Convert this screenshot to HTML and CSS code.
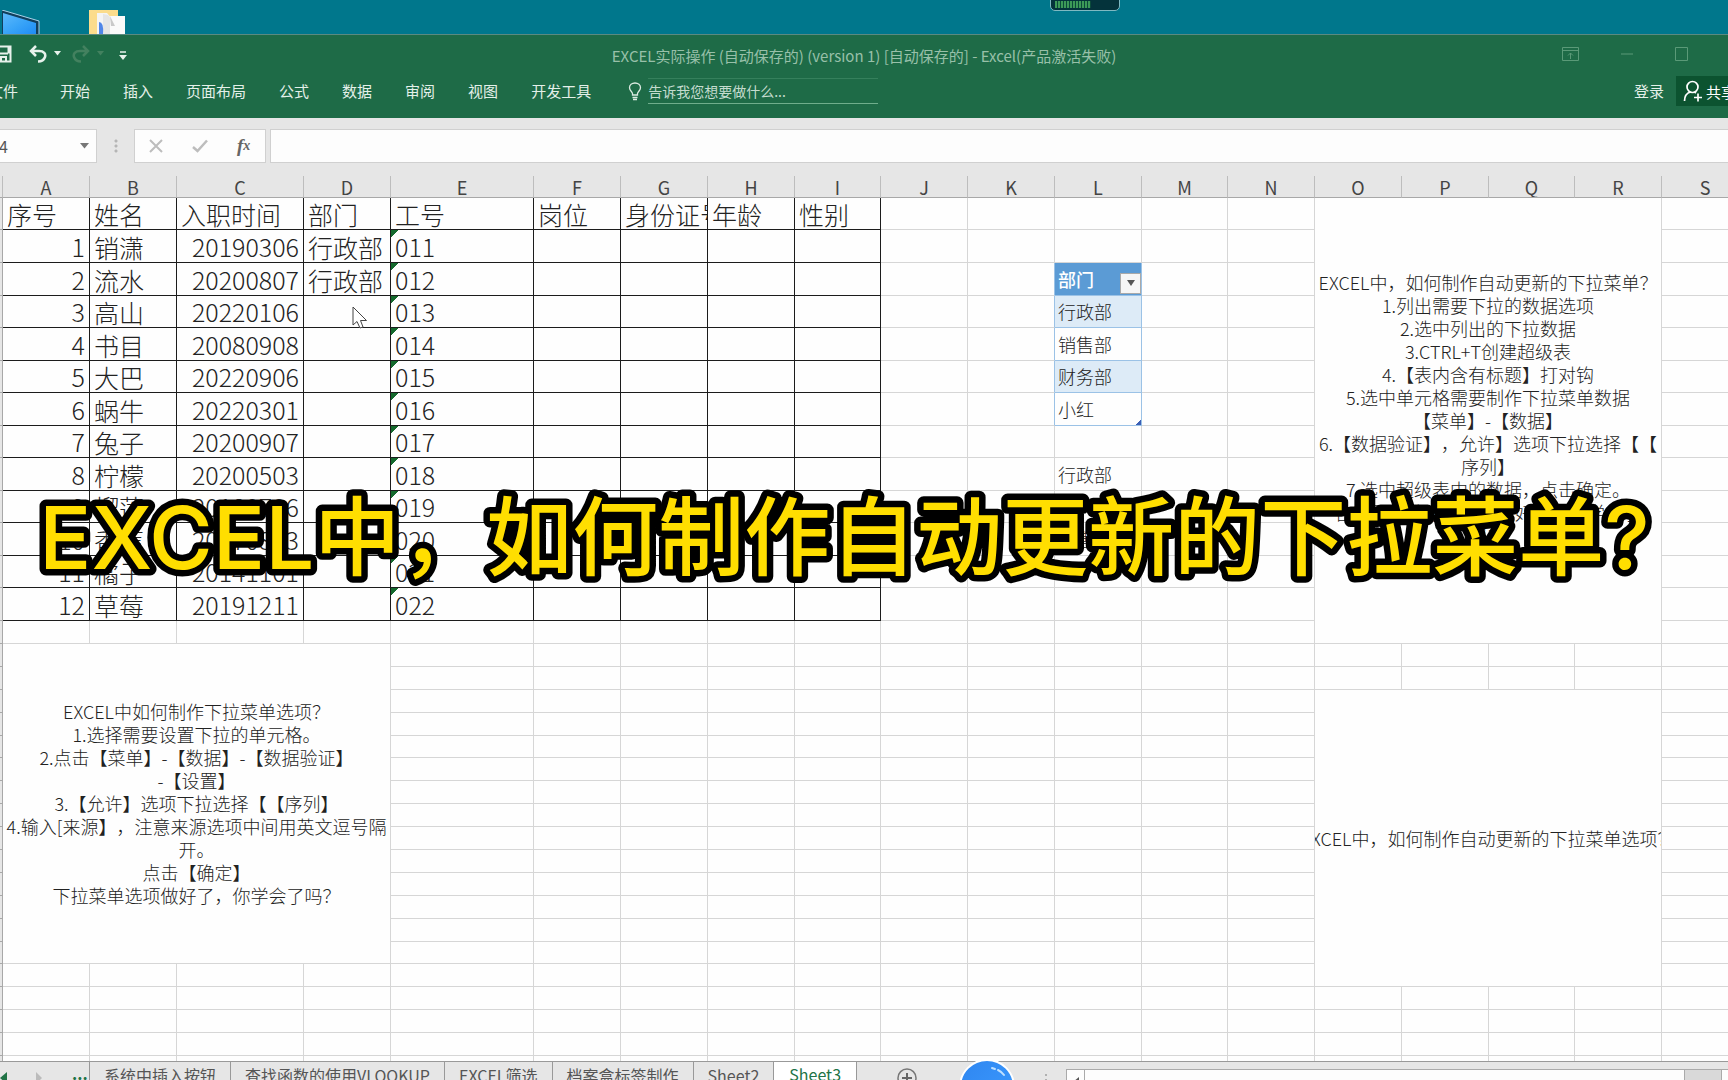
FILE: index.html
```html
<!DOCTYPE html>
<html lang="zh-CN">
<head>
<meta charset="utf-8">
<title>EXCEL实际操作 - Excel</title>
<link rel="stylesheet" href="styles.css">
</head>
<body>
<div class="screen">
  <div class="desktop">
    <svg class="desk-icon" width="40" height="24" viewBox="0 0 40 24" aria-hidden="true">
      <defs><linearGradient id="mon" x1="0" y1="0" x2="1" y2="1"><stop offset="0" stop-color="#5db9fb"/><stop offset="0.5" stop-color="#3aa5f8"/><stop offset="1" stop-color="#1e8cf5"/></linearGradient></defs>
      <path d="M2 0L39 11V24H2Z" fill="#123f5c"/><path d="M2 0L39 11V24" fill="none" stroke="#a9d3ea"/><path d="M3 3L36 13V24H3Z" fill="url(#mon)"/>
    </svg>
    <svg class="desk-icon" width="36" height="24" viewBox="0 0 36 24" aria-hidden="true">
      <path d="M0 0H29V24H0Z" fill="#fbdc8c"/><path d="M8 3H18L23 9V24H8Z" fill="#f4f4f4"/><path d="M14 4L19 5L23 10V24H14Z" fill="#e5e5e5"/><path d="M21 6H36V24H21Z" fill="#fafafa"/><path d="M21 6L26 16H22Z" fill="#c9c9c9"/><path d="M10 12Q15 12 14 24H10Z" fill="#4f86e8"/>
    </svg>
    <div class="battery"><span></span></div>
  </div>

  <header class="ribbon">
    <div class="titlebar">
      <div class="quick">
        <button aria-label="保存"><svg width="12" height="18" viewBox="0 0 12 18"><path d="M0 1.500H10.500V16.500H0M0 8.500H8M8.500 1V8.500M1 16V12H6V16" fill="none" stroke="#e8f2ec" stroke-width="2"/></svg></button>
        <button aria-label="撤消"><svg width="18" height="18" viewBox="0 0 18 18"><path d="M7 1L2 6L7 11M2.500 6H10C15 6 17 9 16 12C15 15 12 16.500 9 16.500" fill="none" stroke="#e8f2ec" stroke-width="2.500"/></svg></button>
        <svg class="caret" width="7" height="5" viewBox="0 0 7 5"><path d="M0 0H7L3.500 4.500Z" fill="#e8f2ec"/></svg>
        <button class="redo" aria-label="恢复"><svg width="18" height="18" viewBox="0 0 18 18"><path d="M11 1L16 6L11 11M15.500 6H8C3 6 1 9 2 12C3 15 6 16.500 9 16.500" fill="none" stroke="#43815f" stroke-width="2.500"/></svg></button>
        <svg class="caret" width="7" height="5" viewBox="0 0 7 5"><path d="M0 0H7L3.500 4.500Z" fill="#43815f"/></svg>
        <button class="customize" aria-label="自定义"><svg width="8" height="10" viewBox="0 0 8 10"><path d="M1 1H7" stroke="#e8f2ec" stroke-width="1.500"/><path d="M0 4H8L4 9Z" fill="#e8f2ec"/></svg></button>
      </div>
      <div class="title">EXCEL实际操作 (自动保存的) (version 1) [自动保存的] - Excel(产品激活失败)</div>
      <div class="window">
        <button aria-label="功能区选项"><svg width="17" height="14" viewBox="0 0 17 14"><path d="M.5 .5H16.500V13.500H.5ZM.5 3.500H16.500M8.500 12V6M6 8.500L8.500 6L11 8.500" fill="none" stroke="#5a9a78"/></svg></button>
        <button aria-label="最小化"><svg width="12" height="14" viewBox="0 0 12 14"><path d="M0 7H12" stroke="#5a9a78"/></svg></button>
        <button aria-label="最大化"><svg width="13" height="14" viewBox="0 0 13 14"><path d="M.5 .5H12.500V13.500H.5Z" fill="none" stroke="#5a9a78"/></svg></button>
      </div>
    </div>
    <nav class="tabs">
      <a class="file" href="#">文件</a><a href="#">开始</a><a href="#">插入</a><a href="#">页面布局</a><a href="#">公式</a><a href="#">数据</a><a href="#">审阅</a><a href="#">视图</a><a href="#">开发工具</a>
      <svg class="bulb" width="14" height="19" viewBox="0 0 14 19" aria-hidden="true"><path d="M4.500 13V11.500C4.500 10 1.500 8.500 1.500 5.800C1.500 3 4 1 7 1S12.500 3 12.500 5.800C12.500 8.500 9.500 10 9.500 11.500V13ZM4.500 15.500H9.500M5 17.500H9" fill="none" stroke="#dcebe2" stroke-width="1.300"/></svg>
      <input class="tell" aria-label="操作说明搜索" placeholder="告诉我您想要做什么...">
      <a class="login" href="#">登录</a>
      <button class="share"><svg width="20" height="22" viewBox="0 0 20 22" aria-hidden="true"><circle cx="9.500" cy="7" r="5.500" fill="none" stroke="#fff" stroke-width="1.700"/><path d="M1.500 21C1.500 16 4 13 7.500 12M11.500 12L13 13M15 13.500V21.500M11 17.500H19" fill="none" stroke="#fff" stroke-width="1.700"/></svg>共享</button>
    </nav>
  </header>

  <div class="formula">
    <div class="namebox"><input aria-label="名称框" value="D4"><svg width="9" height="6" viewBox="0 0 9 6"><path d="M0 0H9L4.500 5.500Z" fill="#777"/></svg></div>
    <span class="dots"></span>
    <div class="fx">
      <button aria-label="取消"><svg width="14" height="14" viewBox="0 0 14 14"><path d="M1 1L13 13M13 1L1 13" stroke="#bdbdbd" stroke-width="2"/></svg></button>
      <button aria-label="输入"><svg width="16" height="14" viewBox="0 0 16 14"><path d="M1 8L5.500 12L15 1.500" fill="none" stroke="#bdbdbd" stroke-width="2.500"/></svg></button>
      <button class="fn" aria-label="插入函数">f<sub>x</sub></button>
    </div>
    <input class="bar" aria-label="编辑栏">
  </div>

  <main class="sheet">
    <table class="grid">
      <colgroup><col class="c3"><col class="c87"><col class="c87"><col class="c127"><col class="c87"><col class="c143"><col class="c87"><col class="c87"><col class="c87"><col class="c86"><col class="c87"><col class="c87"><col class="c87"><col class="c86"><col class="c87"><col class="c87"><col class="c87"><col class="c86"><col class="c87"><col></colgroup>
      <thead><tr><th></th><th>A</th><th>B</th><th>C</th><th>D</th><th>E</th><th>F</th><th>G</th><th>H</th><th>I</th><th>J</th><th>K</th><th>L</th><th>M</th><th>N</th><th>O</th><th>P</th><th>Q</th><th>R</th><th>S</th></tr></thead>
      <tbody class="staff">
        <tr class="h32"><th></th><td>序号</td><td>姓名</td><td>入职时间</td><td>部门</td><td>工号</td><td>岗位</td><td>身份证号</td><td>年龄</td><td>性别</td><td></td><td></td><td></td><td></td><td></td><td class="note" colspan="4" rowspan="14">EXCEL中，如何制作自动更新的下拉菜单？<br>1.列出需要下拉的数据选项<br>2.选中列出的下拉数据<br>3.CTRL+T创建超级表<br>4.【表内含有标题】打对钩<br>5.选中单元格需要制作下拉菜单数据<br>【菜单】-【数据】<br>6.【数据验证】，允许】选项下拉选择【【<br>序列】<br>7.选中超级表中的数据，点击确定。<br>自动更新的下拉菜单做好了，你学会了<br>吗？<br>&nbsp;</td><td></td></tr>
        <tr class="h33"><th></th><td class="n">1</td><td>销潇</td><td class="n">20190306</td><td>行政部</td><td class="id">011</td><td></td><td></td><td></td><td></td><td></td><td></td><td></td><td></td><td></td><td></td></tr>
        <tr class="h33"><th></th><td class="n">2</td><td>流水</td><td class="n">20200807</td><td>行政部</td><td class="id">012</td><td></td><td></td><td></td><td></td><td></td><td class="pre"></td><td class="list head"><div class="filter"><span>部门</span><button aria-label="筛选"><svg width="8" height="6" viewBox="0 0 8 6"><path d="M0 0H8L4 6Z" fill="#555"/></svg></button></div></td><td></td><td></td><td></td></tr>
        <tr class="h32"><th></th><td class="n">3</td><td>高山</td><td class="n">20220106</td><td></td><td class="id">013</td><td></td><td></td><td></td><td></td><td></td><td class="pre"></td><td class="list band">行政部</td><td></td><td></td><td></td></tr>
        <tr class="h33"><th></th><td class="n">4</td><td>书目</td><td class="n">20080908</td><td></td><td class="id">014</td><td></td><td></td><td></td><td></td><td></td><td class="pre"></td><td class="list">销售部</td><td></td><td></td><td></td></tr>
        <tr class="h32"><th></th><td class="n">5</td><td>大巴</td><td class="n">20220906</td><td></td><td class="id">015</td><td></td><td></td><td></td><td></td><td></td><td class="pre"></td><td class="list band">财务部</td><td></td><td></td><td></td></tr>
        <tr class="h33"><th></th><td class="n">6</td><td>蜗牛</td><td class="n">20220301</td><td></td><td class="id">016</td><td></td><td></td><td></td><td></td><td></td><td class="pre"></td><td class="list last">小红</td><td></td><td></td><td></td></tr>
        <tr class="h32"><th></th><td class="n">7</td><td>兔子</td><td class="n">20200907</td><td></td><td class="id">017</td><td></td><td></td><td></td><td></td><td></td><td></td><td></td><td></td><td></td><td></td></tr>
        <tr class="h33"><th></th><td class="n">8</td><td>柠檬</td><td class="n">20200503</td><td></td><td class="id">018</td><td></td><td></td><td></td><td></td><td></td><td></td><td class="small">行政部</td><td></td><td></td><td></td></tr>
        <tr class="h32"><th></th><td class="n">9</td><td>榴莲</td><td class="n">20180706</td><td></td><td class="id">019</td><td></td><td></td><td></td><td></td><td></td><td></td><td></td><td></td><td></td><td></td></tr>
        <tr class="h33"><th></th><td class="n">10</td><td>香蕉</td><td class="n">20170803</td><td></td><td class="id">020</td><td></td><td></td><td></td><td></td><td></td><td></td><td class="small">销售部</td><td></td><td></td><td></td></tr>
        <tr class="h32"><th></th><td class="n">11</td><td>橘子</td><td class="n">20141101</td><td></td><td class="id">021</td><td></td><td></td><td></td><td></td><td></td><td></td><td></td><td></td><td></td><td></td></tr>
        <tr class="h33"><th></th><td class="n">12</td><td>草莓</td><td class="n">20191211</td><td></td><td class="id">022</td><td></td><td></td><td></td><td></td><td></td><td></td><td></td><td></td><td></td><td></td></tr>
        <tr class="h23 free"><th></th><td></td><td></td><td></td><td></td><td></td><td></td><td></td><td></td><td></td><td></td><td></td><td></td><td></td><td></td><td></td></tr>
      </tbody>
      <tbody>
        <tr class="h23"><th></th><td class="note" colspan="4" rowspan="14">EXCEL中如何制作下拉菜单选项？<br>1.选择需要设置下拉的单元格。<br>2.点击【菜单】-【数据】-【数据验证】<br>-【设置】<br>3.【允许】选项下拉选择【【序列】<br>4.输入[来源】，注意来源选项中间用英文逗号隔<br>开。<br>点击【确定】<br>下拉菜单选项做好了，你学会了吗？</td><td></td><td></td><td></td><td></td><td></td><td></td><td></td><td></td><td></td><td></td><td></td><td></td><td></td><td></td><td></td></tr>
        <tr class="h23"><th></th><td></td><td></td><td></td><td></td><td></td><td></td><td></td><td></td><td></td><td></td><td></td><td></td><td></td><td></td><td></td></tr>
        <tr class="h23"><th></th><td></td><td></td><td></td><td></td><td></td><td></td><td></td><td></td><td></td><td></td><td class="note" colspan="4" rowspan="13"><div class="crop"><span>EXCEL中，如何制作自动更新的下拉菜单选项？</span></div></td><td></td></tr>
        <tr class="h23"><th></th><td></td><td></td><td></td><td></td><td></td><td></td><td></td><td></td><td></td><td></td><td></td></tr>
        <tr class="h22"><th></th><td></td><td></td><td></td><td></td><td></td><td></td><td></td><td></td><td></td><td></td><td></td></tr>
        <tr class="h23"><th></th><td></td><td></td><td></td><td></td><td></td><td></td><td></td><td></td><td></td><td></td><td></td></tr>
        <tr class="h23"><th></th><td></td><td></td><td></td><td></td><td></td><td></td><td></td><td></td><td></td><td></td><td></td></tr>
        <tr class="h23"><th></th><td></td><td></td><td></td><td></td><td></td><td></td><td></td><td></td><td></td><td></td><td></td></tr>
        <tr class="h23"><th></th><td></td><td></td><td></td><td></td><td></td><td></td><td></td><td></td><td></td><td></td><td></td></tr>
        <tr class="h23"><th></th><td></td><td></td><td></td><td></td><td></td><td></td><td></td><td></td><td></td><td></td><td></td></tr>
        <tr class="h23"><th></th><td></td><td></td><td></td><td></td><td></td><td></td><td></td><td></td><td></td><td></td><td></td></tr>
        <tr class="h23"><th></th><td></td><td></td><td></td><td></td><td></td><td></td><td></td><td></td><td></td><td></td><td></td></tr>
        <tr class="h23"><th></th><td></td><td></td><td></td><td></td><td></td><td></td><td></td><td></td><td></td><td></td><td></td></tr>
        <tr class="h22"><th></th><td></td><td></td><td></td><td></td><td></td><td></td><td></td><td></td><td></td><td></td><td></td></tr>
        <tr class="h23"><th></th><td></td><td></td><td></td><td></td><td></td><td></td><td></td><td></td><td></td><td></td><td></td><td></td><td></td><td></td><td></td></tr>
        <tr class="h23"><th></th><td></td><td></td><td></td><td></td><td></td><td></td><td></td><td></td><td></td><td></td><td></td><td></td><td></td><td></td><td></td><td></td><td></td><td></td><td></td></tr>
        <tr class="h23"><th></th><td></td><td></td><td></td><td></td><td></td><td></td><td></td><td></td><td></td><td></td><td></td><td></td><td></td><td></td><td></td><td></td><td></td><td></td><td></td></tr>
        <tr class="h23"><th></th><td></td><td></td><td></td><td></td><td></td><td></td><td></td><td></td><td></td><td></td><td></td><td></td><td></td><td></td><td></td><td></td><td></td><td></td><td></td></tr>
        <tr class="h23"><th></th><td></td><td></td><td></td><td></td><td></td><td></td><td></td><td></td><td></td><td></td><td></td><td></td><td></td><td></td><td></td><td></td><td></td><td></td><td></td></tr>
      </tbody>
    </table>
  </main>

  <footer class="sheets">
    <div class="steps">
      <svg width="7" height="12" viewBox="0 0 7 12"><path d="M7 0V12L0 6Z" fill="#217346"/></svg>
      <svg width="7" height="12" viewBox="0 0 7 12"><path d="M0 0V12L6 6Z" fill="#bbb"/></svg>
      <span>...</span>
    </div>
    <a href="#">系统中插入按钮</a><a href="#">查找函数的使用VLOOKUP</a><a href="#">EXCEL筛选</a><a href="#">档案盒标签制作</a><a href="#">Sheet2</a><a class="on" href="#">Sheet3</a>
    <button class="add" aria-label="新工作表"><svg width="20" height="20" viewBox="0 0 20 20"><circle cx="10" cy="10" r="9" fill="none" stroke="#777" stroke-width="1.500"/><path d="M10 5V15M5 10H15" stroke="#666" stroke-width="2"/></svg></button>
    <svg class="grip" width="4" height="16" viewBox="0 0 4 16" aria-hidden="true"><path d="M1 1H3V3H1ZM1 6H3V8H1ZM1 11H3V13H1Z" fill="#b0b0b0"/></svg>
    <div class="scroll"><button aria-label="向左滚动"><svg width="6" height="10" viewBox="0 0 6 10"><path d="M6 0V10L0 5Z" fill="#555"/></svg></button><span class="track"></span><span class="thumb"></span><span class="rest"></span></div>
  </footer>

  <svg class="ball" width="56" height="56" viewBox="0 0 56 56" aria-hidden="true">
    <defs><linearGradient id="ball" x1="0" y1="0" x2="1" y2="1"><stop offset="0" stop-color="#2f86f0"/><stop offset="1" stop-color="#3c9bff"/></linearGradient></defs>
    <circle cx="28" cy="28" r="27" fill="url(#ball)" stroke="#fff" stroke-width="2"/><path d="M33 9L36 10M39 11Q43 13 45 16" stroke="#bfe0ff" stroke-width="2" fill="none" stroke-linecap="round"/>
  </svg>
  <svg class="pointer" width="16" height="24" viewBox="0 0 16 24" aria-hidden="true"><path d="M1 1V19L5 15.500L8 22L11 21L8.500 14.500H14.500Z" fill="#fff" stroke="#444"/></svg>
  <svg class="caption"><text x="39" y="569"><tspan class="latin">EXCEL</tspan>中，如何制作自动更新的下拉菜单?</text></svg>
</div>
</body>
</html>
```
FILE: styles.css
```css
* { box-sizing: border-box; }
body { margin: 0; background: #e6e6e6; font-family: "Noto Sans CJK SC", sans-serif; color: #222; text-spacing-trim: space-all; }
a { color: inherit; text-decoration: none; }
button { border: 0; padding: 0; background: none; font: inherit; color: inherit; display: flex; align-items: center; }
input { font: inherit; color: inherit; border: 0; padding: 0; outline: 0; min-width: 0; }
svg { display: block; flex: none; }

.screen { position: relative; height: 100vh; overflow: hidden; display: flex; flex-direction: column; }
.desktop { flex: none; height: 34px; background: #00778c; display: flex; align-items: flex-end; gap: 49px; position: relative; }
.battery { position: absolute; top: -5px; left: 1050px; width: 70px; height: 16px; padding: 5px 4px 2px; border: 1px solid #7fb9c2; border-radius: 5px; background: #04333b; }
.battery span { display: block; width: 36px; height: 7px; background: repeating-linear-gradient(90deg, #3c9a58 0 2px, #0b4a3a 2px 3px); }

.ribbon { flex: none; height: 84px; background: #1e6b47; border-top: 1px solid #5b8a80; color: #e4f0e9; }
.titlebar { display: grid; grid-template-columns: 1fr auto 1fr; align-items: center; height: 37px; }
.quick { display: flex; align-items: center; }
.quick button + .caret { margin-left: 7px; }
.quick button:nth-child(2) { margin-left: 17px; }
.redo { margin-left: 11px; }
.customize { margin-left: 15px; padding-top: 4px; }
.title { font-size: 15px; line-height: 22px; padding-top: 5px; color: #98c0a9; white-space: nowrap; }
.window { display: flex; justify-content: flex-end; gap: 42px; padding-right: 40px; }

.tabs { display: flex; align-items: center; height: 38px; font-size: 15px; white-space: nowrap; }
.tabs a { margin-right: 33px; line-height: 24px; }
.tabs .file { margin-left: -12px; margin-right: 42px; }
.bulb { margin-left: 4px; margin-right: 6px; }
.tell { width: 230px; height: 26px; background: none; border-top: 1px solid #35805c; border-bottom: 1px solid #6fae8c; font-size: 14px; }
.tell::placeholder { color: #c4dccf; opacity: 1; }
.tabs .login { margin-left: auto; margin-right: 12px; }
.share { width: 52px; height: 30px; padding-left: 7px; gap: 3px; background: #0c5330; color: #fff; overflow: hidden; }

.formula { flex: none; display: flex; align-items: center; height: 58px; padding-bottom: 2px; }
.formula > * { height: 34px; }
.namebox { width: 97px; display: flex; align-items: center; justify-content: space-between; background: #fdfdfd; border: 1px solid #d0d0d0; border-left: 0; padding-right: 7px; font-size: 16px; overflow: hidden; }
.namebox input { width: 60px; margin-left: -12px; background: none; color: #555; }
.dots { width: 37px; background: radial-gradient(circle, #b5b5b5 1px, transparent 2px) center / 4px 6px no-repeat, radial-gradient(circle, #b5b5b5 1px, transparent 2px) 50% 10px / 4px 4px no-repeat, radial-gradient(circle, #b5b5b5 1px, transparent 2px) 50% 20px / 4px 4px no-repeat; }
.fx { width: 132px; display: flex; align-items: center; gap: 29px; padding-left: 14px; background: #fdfdfd; border: 1px solid #d0d0d0; }
.fn { font: italic bold 19px "Liberation Serif", serif; color: #666; }
.fn sub { font-size: 14px; line-height: 14px; }
.bar { flex: 1; margin-left: 4px; background: #fdfdfd; border: 1px solid #d0d0d0; border-right: 0; }

.sheet { flex: 1; min-height: 0; overflow: hidden; background: #fefefe; }
.grid { table-layout: fixed; border-spacing: 0; width: 100%; min-width: 1749px; }
.c3 { width: 3px; }
.c86 { width: 86px; }
.c87 { width: 87px; }
.c127 { width: 127px; }
.c143 { width: 143px; }
.grid th, .grid td { padding: 0; border-right: 1px solid #d6d6d6; border-bottom: 1px solid #d6d6d6; font-weight: 300; white-space: nowrap; overflow: hidden; }
.grid th { background: #e6e6e6; border-color: #a8a8a8; }
.grid thead th { height: 22px; font-size: 18px; line-height: 19px; padding-top: 2px; font-weight: 400; color: #444; border-right-color: #bdbdbd; }
.h22 { height: 22px; }
.h23 { height: 23px; }
.h32 { height: 32px; }
.h33 { height: 33px; }
.staff td { font-size: 25px; line-height: 29px; padding-left: 4px; padding-top: 2px; }
.staff tr:not(.free) td:nth-child(-n+10) { border-color: #1c1c1c; }
.staff .free td { line-height: 20px; }
.staff td.n { text-align: right; padding: 0 4px 0 0; }
.staff td.id { padding-top: 0; background: linear-gradient(135deg, #14692d 5px, transparent 5px) no-repeat; }
.grid td.note { font-size: 18px; line-height: 23px; text-align: center; padding: 0; vertical-align: middle; }
.crop { display: flex; justify-content: center; overflow: hidden; }
.staff td.small, .staff td.list { font-size: 18px; padding-top: 0; padding-left: 3px; }
.grid td.pre, .grid td.list { border-right-color: #9bc2e6; }
.grid td.list { border-bottom-color: #9bc2e6; }
.grid td.band { background: #ddebf7; }
.grid td.head { background: #5b9bd5; color: #fff; font-weight: 500; }
.grid td.last { background: linear-gradient(315deg, #3b5fb5 4px, transparent 4px); }
.filter { display: flex; align-items: flex-end; justify-content: space-between; }
.filter button { width: 21px; height: 21px; justify-content: center; background: #f6f6f6; border: 1px solid #a9a9a9; }

.sheets { flex: none; display: flex; height: 19px; overflow: hidden; background: #e6e6e6; border-top: 1px solid #999; font-size: 16px; line-height: 26px; color: #555; white-space: nowrap; }
.steps { width: 90px; display: flex; align-items: flex-start; gap: 29px; padding-top: 10px; border-right: 1px solid #999; color: #217346; font-weight: 700; }
.steps span { line-height: 2px; }
.sheets a { height: 26px; padding: 0 14px; border-right: 1px solid #999; }
.sheets .on { background: #fff; color: #217346; margin-top: -1px; padding: 0 15px; }
.add { height: 20px; margin: 6px 0 0 40px; }
.grip { margin: 11px 18px 0 127px; }
.scroll { flex: 1; display: flex; height: 24px; margin-top: 7px; border-top: 1px solid #aaa; border-left: 1px solid #aaa; background: #fdfdfd; }
.scroll button { width: 18px; justify-content: center; border-right: 1px solid #aaa; }
.track { flex: 1; }
.thumb { width: 38px; background: #d9d9d9; border: 1px solid #aaa; border-top: 0; }
.rest { width: 6px; }

.ball { position: absolute; left: 959px; top: 1059px; }
.pointer { position: absolute; left: 352px; top: 306px; }
.caption { position: absolute; left: 0; top: 0; width: 100%; height: 100%; pointer-events: none; }
.caption text { font: 500 86px "Inter", "Noto Sans CJK SC", sans-serif; fill: #ffde00; stroke: #000; stroke-width: 13px; stroke-linejoin: round; paint-order: stroke fill; }
.caption .latin { font-size: 87px; }
```
